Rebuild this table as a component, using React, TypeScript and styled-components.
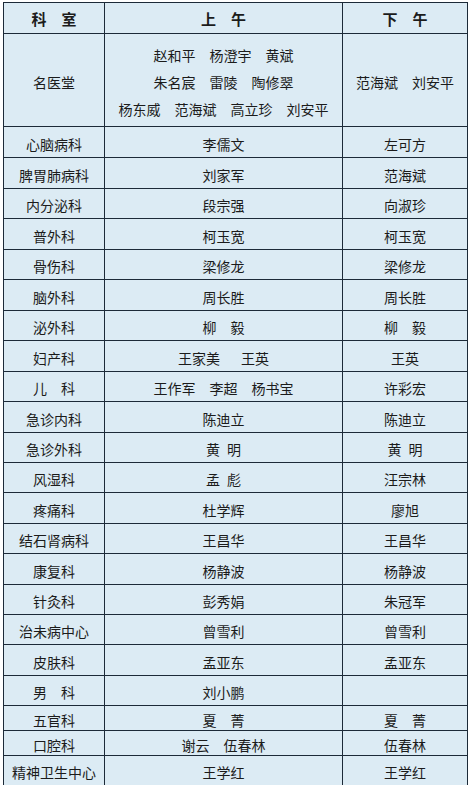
import * as React from "react"
import styled, { createGlobalStyle } from 'styled-components'

const GlobalStyle = createGlobalStyle`
    html, body {
        margin: 0;
        padding: 0;
        background: #ffffff;
    }
    body {
        font-family: "Noto Sans CJK SC", "Noto Sans", sans-serif;
    }
`

const borderColor = '#1c2a38'
const cellColor = '#dcebf4'

const Page = styled.div`
    width: 471px;
    height: 785px;
    padding: 2px 0 0 3px;
    box-sizing: border-box;
    background: #ffffff;
`

const Table = styled.table`
    width: 464px;
    border-collapse: collapse;
    table-layout: fixed;
    background: ${cellColor};
    color: #1b1b1b;
    font-size: 14px;
`

const Row = styled.tr<{ h: number }>`
    height: ${(props) => props.h}px;
`

const Cell = styled.td`
    border: 1px solid ${borderColor};
    padding: 3px 0 0 0;
    text-align: center;
    vertical-align: middle;
    white-space: pre;
    line-height: 18px;
    box-sizing: border-box;
`

const HeadCell = styled(Cell)`
    font-weight: 700;
    font-size: 15px;
    padding-top: 1px;
`

const NameLines = styled.div`
    display: flex;
    flex-direction: column;
    align-items: center;
    gap: 9px;
`

interface Dept {
    name: string;
    am: string;
    pm: string;
    h: number;
}

const S = '\u3000'
const E = '\u2002'

const rows: Dept[] = [
    { name: '心脑病科', am: '李儒文', pm: '左可方', h: 31 },
    { name: '脾胃肺病科', am: '刘家军', pm: '范海斌', h: 31 },
    { name: '内分泌科', am: '段宗强', pm: '向淑珍', h: 30 },
    { name: '普外科', am: '柯玉宽', pm: '柯玉宽', h: 31 },
    { name: '骨伤科', am: '梁修龙', pm: '梁修龙', h: 30 },
    { name: '脑外科', am: '周长胜', pm: '周长胜', h: 31 },
    { name: '泌外科', am: '柳' + S + '毅', pm: '柳' + S + '毅', h: 30 },
    { name: '妇产科', am: '王家美' + S + E + '王英', pm: '王英', h: 31 },
    { name: '儿' + S + '科', am: '王作军' + S + '李超' + S + '杨书宝', pm: '许彩宏', h: 30 },
    { name: '急诊内科', am: '陈迪立', pm: '陈迪立', h: 31 },
    { name: '急诊外科', am: '黄' + E + '明', pm: '黄' + E + '明', h: 30 },
    { name: '风湿科', am: '孟' + E + '彪', pm: '汪宗林', h: 30 },
    { name: '疼痛科', am: '杜学辉', pm: '廖旭', h: 31 },
    { name: '结石肾病科', am: '王昌华', pm: '王昌华', h: 30 },
    { name: '康复科', am: '杨静波', pm: '杨静波', h: 31 },
    { name: '针灸科', am: '彭秀娟', pm: '朱冠军', h: 30 },
    { name: '治未病中心', am: '曾雪利', pm: '曾雪利', h: 30 },
    { name: '皮肤科', am: '孟亚东', pm: '孟亚东', h: 31 },
    { name: '男' + S + '科', am: '刘小鹏', pm: '', h: 30 },
    { name: '五官科', am: '夏' + S + '菁', pm: '夏' + S + '菁', h: 25 },
    { name: '口腔科', am: '谢云' + S + '伍春林', pm: '伍春林', h: 25 },
    { name: '精神卫生中心', am: '王学红', pm: '王学红', h: 30 },
]

const famous = [
    ['赵和平', '杨澄宇', '黄斌'],
    ['朱名宸', '雷陵', '陶修翠'],
    ['杨东威', '范海斌', '高立珍', '刘安平'],
]

const App = () => {
    return (
        <Page>
            <GlobalStyle />
            <Table>
                <colgroup>
                    <col style={{ width: 101 }} />
                    <col style={{ width: 238 }} />
                    <col style={{ width: 125 }} />
                </colgroup>
                <tbody>
                    <Row h={31}>
                        <HeadCell>{'科' + S + '室'}</HeadCell>
                        <HeadCell>{'上' + S + '午'}</HeadCell>
                        <HeadCell>{'下' + S + '午'}</HeadCell>
                    </Row>
                    <Row h={93}>
                        <Cell>名医堂</Cell>
                        <Cell>
                            <NameLines>
                                {famous.map((line, i) => (
                                    <span key={i}>{line.join(S)}</span>
                                ))}
                            </NameLines>
                        </Cell>
                        <Cell>{'范海斌' + S + '刘安平'}</Cell>
                    </Row>
                    {rows.map((r) => (
                        <Row h={r.h} key={r.name}>
                            <Cell>{r.name}</Cell>
                            <Cell>{r.am}</Cell>
                            <Cell>{r.pm}</Cell>
                        </Row>
                    ))}
                </tbody>
            </Table>
        </Page>
    )
}

export default App
